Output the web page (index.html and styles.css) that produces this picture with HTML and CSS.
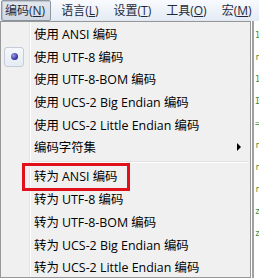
FILE: index.html
```html
<!DOCTYPE html>
<html lang="zh-CN">
<head>
    <meta charset="UTF-8">
    <title>编码菜单</title>
    <link rel="stylesheet" href="styles.css">
</head>
<body>
    <div class="menubar">
        <span class="top active">编码(<u>N</u>)</span>
        <span class="top">语言(<u>L</u>)</span>
        <span class="top">设置(<u>T</u>)</span>
        <span class="top">工具(<u>O</u>)</span>
        <span class="top">宏(<u>M</u>)</span>
    </div>
    <div class="workspace">
        <div class="dropdown">
            <div class="item">使用 ANSI 编码</div>
            <div class="item checked"><span class="check"><span class="dot"></span></span>使用 UTF-8 编码</div>
            <div class="item">使用 UTF-8-BOM 编码</div>
            <div class="item">使用 UCS-2 Big Endian 编码</div>
            <div class="item">使用 UCS-2 Little Endian 编码</div>
            <div class="item sub">编码字符集<span class="arrow"></span></div>
            <div class="sep"></div>
            <div class="item marked"><span class="box">转为 ANSI 编码</span></div>
            <div class="item">转为 UTF-8 编码</div>
            <div class="item">转为 UTF-8-BOM 编码</div>
            <div class="item">转为 UCS-2 Big Endian 编码</div>
            <div class="item">转为 UCS-2 Little Endian 编码</div>
        </div>
        <div class="editor">
            <div class="tb"></div>
            <div class="code">
                <span>1</span><span>r</span><span>1</span><span>I</span><span>=</span><span>r</span><span>r</span><span>r</span><span>z</span><span>z</span>
            </div>
        </div>
    </div>
</body>
</html>
```
FILE: styles.css
```css
body {
    margin: 0;
    font-family: "Open Sans", "Noto Sans CJK SC", sans-serif;
    font-size: 12.4px;
    color: #000;
    background: #fff;
    width: 259px;
    height: 278px;
    overflow: hidden;
}
.menubar {
    display: flex;
    height: 21px;
    background: linear-gradient(#f8fafd, #e4ebf5);
    color: #1e2a3c;
    font-size: 12px;
}
.top {
    flex: none;
    white-space: nowrap;
    padding: 0 3px 0 4px;
    margin-right: 6px;
    line-height: 19px;
    border: 1px solid transparent;
}
.top u { text-decoration: underline; }
.top.active {
    margin-left: 1px;
    margin-right: 5px;
    padding: 0 5px 0 3px;
    border-color: #8e96a2;
    border-radius: 2px;
    background: linear-gradient(#e3e8ef, #d0d8e4);
    box-shadow: inset 1px 1px 1px rgba(0,0,0,0.15);
}
.workspace {
    display: flex;
    height: 257px;
}
.dropdown {
    width: 249px;
    flex: none;
    border: 1px solid #979797;
    padding: 1px 0;
    background:
        linear-gradient(90deg, transparent 28px, #e2e3e3 28px, #e2e3e3 29px, #fff 29px, #fff 30px, transparent 30px),
        #f0f0f0;
    box-shadow: 2px 2px 3px rgba(0,0,0,0.3);
    height: 253px;
}
.item {
    position: relative;
    display: flex;
    align-items: center;
    height: 22.6px;
    padding-left: 33px;
    white-space: nowrap;
}
.check {
    position: absolute;
    left: 3px;
    top: 1px;
    width: 20px;
    height: 20px;
    box-sizing: border-box;
    border: 1px solid #c4ccd8;
    border-radius: 3px;
    background: linear-gradient(#f4f7fb, #e6ecf4);
    display: flex;
    align-items: center;
    justify-content: center;
}
.dot {
    width: 7px;
    height: 7px;
    border-radius: 50%;
    background: radial-gradient(circle at 35% 35%, #9a9ae8, #2c2c9a 70%);
}
.arrow {
    position: absolute;
    right: 9px;
    top: 7px;
    border-left: 4px solid #000;
    border-top: 4px solid transparent;
    border-bottom: 4px solid transparent;
}
.sep {
    height: 1px;
    margin: 2px 2px 3px 31px;
    background: #e0e0e0;
    border-bottom: 1px solid #fff;
}
.marked .box {
    margin-left: -12px;
    padding: 3px 10px 3px 9px;
    border: 3px solid #e2101a;
    line-height: 16px;
}
.editor {
    flex: 1;
    display: flex;
    background: #fff;
}
.tb {
    width: 2px;
    margin-left: 1px;
    background: #a0a0a0;
}
.code {
    display: flex;
    flex-direction: column;
    padding: 4px 0 0 1px;
    font-family: "DejaVu Sans Mono", monospace;
    font-size: 8px;
    line-height: 22px;
    color: #3a8a2a;
}
```
